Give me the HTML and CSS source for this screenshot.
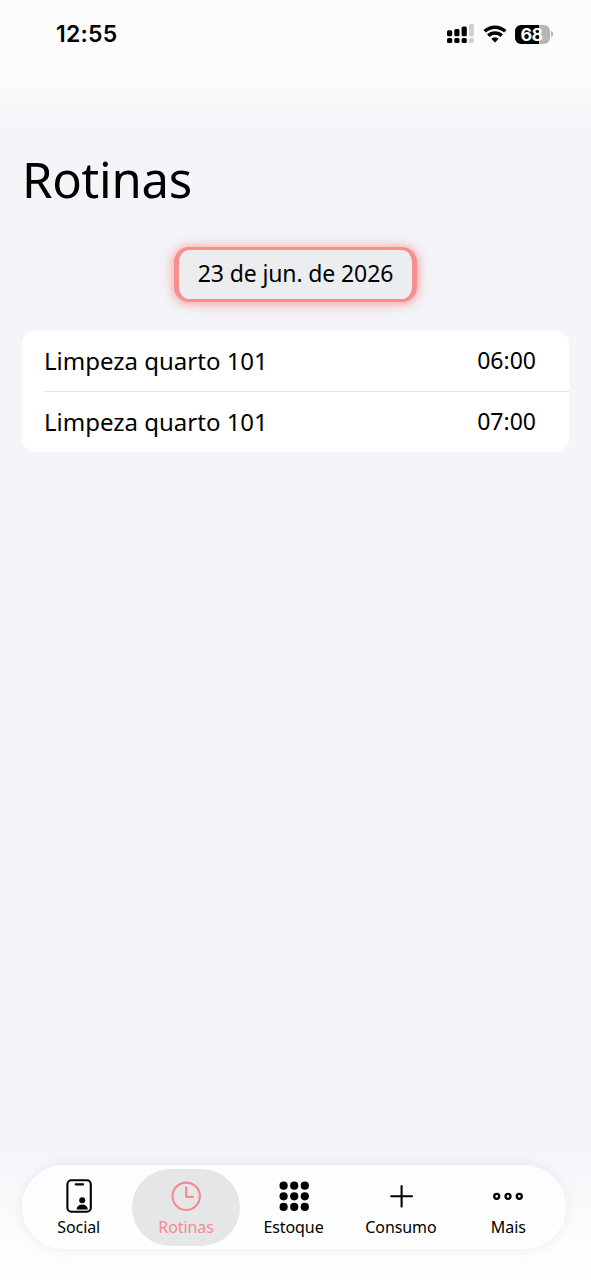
FILE: index.html
```html
<!DOCTYPE html>
<html lang="pt-BR">
<head>
<meta charset="utf-8">
<title>Rotinas</title>
<link rel="stylesheet" href="styles.css">
</head>
<body>
<div class="screen">
  <header class="status">
    <span class="clock">12:55</span>
    <div class="indicators">
      <svg class="signal" width="27" height="20" viewBox="0 0 27 20">
        <g fill="#000">
          <rect x="0" y="6.3" width="5.2" height="6" rx="1.5"/><rect x="7.3" y="5" width="5.2" height="7.3" rx="1.5"/><rect x="14.6" y="2.5" width="5.2" height="9.8" rx="1.5"/>
          <rect x="0" y="14" width="5.2" height="5" rx="1.5"/><rect x="7.3" y="14" width="5.2" height="5" rx="1.5"/><rect x="14.6" y="14" width="5.2" height="5" rx="1.5"/>
        </g>
        <g fill="#cfcfcf"><rect x="22" y="0" width="4.8" height="12.3" rx="1.2"/><rect x="22" y="14" width="4.8" height="5" rx="1.5"/></g>
      </svg>
      <svg class="wifi" width="24" height="18" viewBox="0 0 24 18">
        <g fill="none" stroke="#000" stroke-width="3.5"><path d="M1.7 6.3a14.8 14.8 0 0 1 20.6 0"/><path d="M5.3 10.7a9.6 9.6 0 0 1 13.4 0"/></g>
        <path d="M12 17.6l-3.7-3.8a5.3 5.3 0 0 1 7.4 0z" fill="#000"/>
      </svg>
      <div class="battery"><span>68</span></div>
      <i class="battery-tip"></i>
    </div>
  </header>
  <main>
    <h1>Rotinas</h1>
    <button class="date">23 de jun. de 2026</button>
    <ul class="list">
      <li><span>Limpeza quarto 101</span><time>06:00</time></li>
      <li><span>Limpeza quarto 101</span><time>07:00</time></li>
    </ul>
  </main>
  <footer class="bottom">
    <nav class="tabs">
      <a class="tab">
        <svg width="36" height="36" viewBox="0 0 36 36"><rect x="6.4" y="2.3" width="23.4" height="31.4" rx="4" fill="none" stroke="#000" stroke-width="2.1"/><path d="M14.7 6.3h7.4" stroke="#000" stroke-width="2.2" stroke-linecap="round"/><circle cx="21.2" cy="22.3" r="3" fill="#000"/><path d="M15.5 31.5c.4-3.5 2.7-5.1 5.7-5.1s5.3 1.6 5.7 5.1z" fill="#000"/></svg>
        <span>Social</span>
      </a>
      <a class="tab active">
        <svg width="36" height="36" viewBox="0 0 36 36"><g fill="none" stroke="currentColor" stroke-width="2.1"><circle cx="18.2" cy="18.3" r="13.7"/><path d="M18.2 8.6v10.3h7.6" stroke-linejoin="round"/></g></svg>
        <span>Rotinas</span>
      </a>
      <a class="tab">
        <svg width="36" height="36" viewBox="0 0 36 36"><g fill="#000"><circle cx="7.6" cy="7.7" r="4.1"/><circle cx="18.2" cy="7.7" r="4.1"/><circle cx="28.8" cy="7.7" r="4.1"/><circle cx="7.6" cy="18.3" r="4.1"/><circle cx="18.2" cy="18.3" r="4.1"/><circle cx="28.8" cy="18.3" r="4.1"/><circle cx="7.6" cy="28.9" r="4.1"/><circle cx="18.2" cy="28.9" r="4.1"/><circle cx="28.8" cy="28.9" r="4.1"/></g></svg>
        <span>Estoque</span>
      </a>
      <a class="tab">
        <svg width="36" height="36" viewBox="0 0 36 36"><path d="M18.6 8v20.6M8.2 18.3h20.8" stroke="#000" stroke-width="2.1" stroke-linecap="round"/></svg>
        <span>Consumo</span>
      </a>
      <a class="tab">
        <svg width="36" height="36" viewBox="0 0 36 36"><g fill="none" stroke="#000" stroke-width="2.3"><circle cx="6.7" cy="18.3" r="2.5"/><circle cx="18" cy="18.3" r="2.5"/><circle cx="29.3" cy="18.3" r="2.5"/></g></svg>
        <span>Mais</span>
      </a>
    </nav>
  </footer>
</div>
</body>
</html>
```
FILE: styles.css
```css
* { box-sizing: border-box; }
body { margin: 0; font-family: "Noto Sans", sans-serif; color: #000; }
.screen {
  width: 591px;
  height: 1280px;
  overflow: hidden;
  display: flex;
  flex-direction: column;
  background: linear-gradient(#fcfcfc 0, #fcfcfd 85px, #f7f8fa 100px, #f3f5f9 130px, #f3f5f9 1150px, #fafafc 1205px, #fdfdfd 1245px);
}
.status {
  height: 149px;
  padding: 19px 38px 0 56px;
  display: flex;
  justify-content: space-between;
  align-items: flex-start;
}
.clock { font: 600 23px/30px Inter, sans-serif; letter-spacing: .2px; }
.indicators { display: flex; align-items: center; height: 30px; }
.wifi { margin: 0 8px 0 9px; }
.battery {
  width: 35px;
  height: 19px;
  border-radius: 6px;
  background: linear-gradient(90deg, #000 68%, #b5b5b5 68%);
  color: #fff;
  font: 700 18px/19px Inter, sans-serif;
  text-align: center;
  letter-spacing: -.8px;
}
.battery span { margin-right: 2px; }
.battery-tip { width: 2px; height: 6px; margin-left: 1px; border-radius: 0 3px 3px 0; background: #b5b5b5; }
main { flex: 1; padding: 0 22px; display: flex; flex-direction: column; }
h1 { margin: 0 0 38px; font-size: 49px; font-weight: 400; line-height: 60px; letter-spacing: -.25px; }
.date {
  align-self: center;
  width: 243px;
  height: 55px;
  padding: 0 0 3px;
  border: solid #f78e8f;
  border-width: 3px 5px;
  border-radius: 15px;
  background: #ecedef;
  box-shadow: 0 1px 10px 1px rgba(255, 120, 120, .62), 0 0 20px 2px rgba(255, 120, 120, .14);
  color: #000;
  font: 400 23px/46px "Noto Sans", sans-serif;
  letter-spacing: -.12px;
}
.list {
  width: 547px;
  margin: 29px 0 0;
  padding: 0 0 0 22px;
  list-style: none;
  border-radius: 13px;
  background: #fff;
}
.list li {
  height: 60px;
  padding-right: 33px;
  display: flex;
  justify-content: space-between;
  font-size: 24px;
  line-height: 60px;
}
.list li + li { height: 61px; border-top: 1px solid #e4e4e6; }
.list time { font-size: 23px; line-height: 58px; }
.bottom { padding: 0 25px 31px 22px; }
.tabs {
  height: 84px;
  padding: 4px 4px 4px 3px;
  display: flex;
  border-radius: 42px;
  background: linear-gradient(#fcfdfe, #fefefe);
  box-shadow: 0 0 14px rgba(0, 0, 0, .07);
}
.tab {
  flex: 1 1 0;
  min-width: 0;
  height: 77px;
  padding-top: 9px;
  border-radius: 38.5px;
  display: flex;
  flex-direction: column;
  align-items: center;
  font-size: 16px;
  line-height: 27px;
  letter-spacing: -.08px;
}
.active { background: #e5e6e8; color: #f58b90; }
```
